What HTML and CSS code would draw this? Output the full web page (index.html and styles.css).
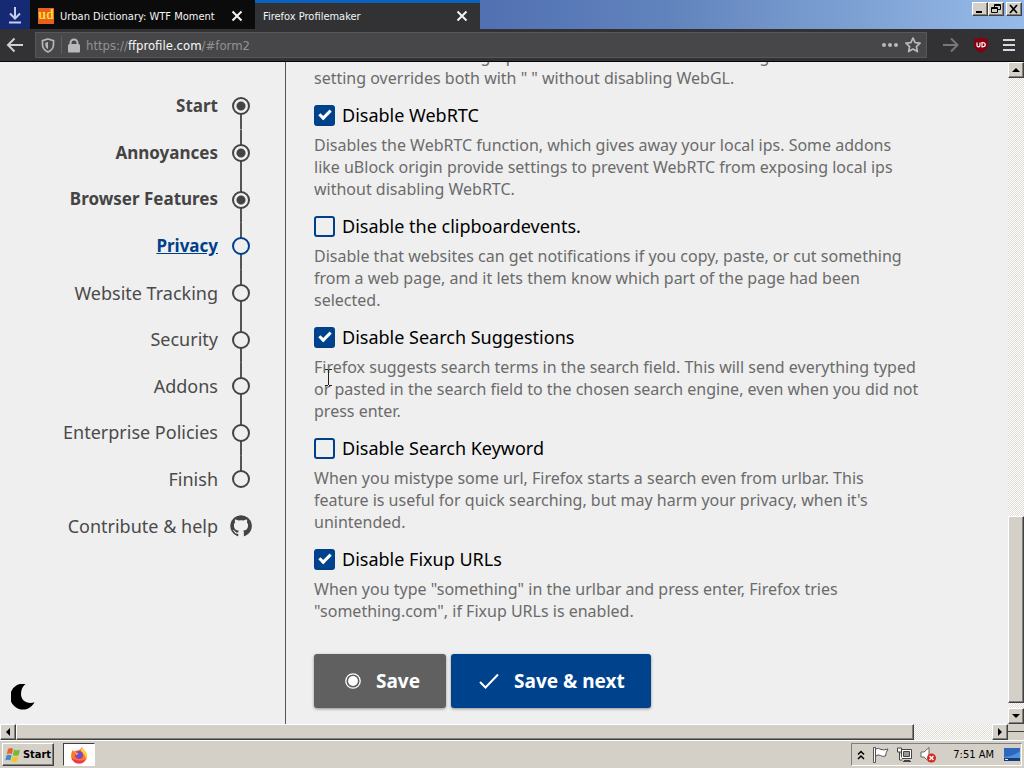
FILE: index.html
```
<!DOCTYPE html>
<html lang="en">
<head>
  <meta charset="UTF-8">
  <title>Firefox Profilemaker</title>
  <link rel="stylesheet" href="styles.css">
</head>
<body>

<header class="browser">
  <div class="tab-strip">
    <button class="download" aria-label="Downloads">
      <svg width="16" height="18" viewBox="0 0 16 18" fill="none" stroke="#c3d0f0" stroke-width="2"><path d="M8 1v11M3 7.500l5 5 5-5M2 16.500h12"/></svg>
    </button>
    <div class="tab">
      <span class="ud-icon">ud</span>
      <span class="tab-title">Urban Dictionary: WTF Moment</span>
      <button class="close" aria-label="Close tab"><svg width="12" height="12" viewBox="0 0 12 12" stroke="#f4f4f4" stroke-width="2"><path d="M1.500 1.500l9 9M10.500 1.500l-9 9"/></svg></button>
    </div>
    <div class="tab active">
      <span class="tab-title">Firefox Profilemaker</span>
      <button class="close" aria-label="Close tab"><svg width="12" height="12" viewBox="0 0 12 12" stroke="#f4f4f4" stroke-width="2"><path d="M1.500 1.500l9 9M10.500 1.500l-9 9"/></svg></button>
    </div>
    <div class="window-buttons">
      <button class="raised" aria-label="Minimize"><svg width="12" height="10" viewBox="0 0 12 10"><path d="M2 7h6v2H2z"/></svg></button>
      <button class="raised" aria-label="Restore"><svg width="12" height="10" viewBox="0 0 12 10" fill="none" stroke="#000"><path d="M4.500 3V.5h6v5H8M4 1.500h7M1.500 3.500h6v5h-6zM1 4.500h7"/></svg></button>
      <button class="raised last" aria-label="Close"><svg width="12" height="10" viewBox="0 0 12 10" stroke="#000" stroke-width="1.800"><path d="M2 1l7 8M9 1L2 9"/></svg></button>
    </div>
  </div>
  <div class="toolbar">
    <button class="tool" aria-label="Back"><svg width="18" height="16" viewBox="0 0 18 16" fill="none" stroke="#d0d0d2" stroke-width="2"><path d="M17 8H2M8.500 1.500L2 8l6.500 6.500"/></svg></button>
    <div class="url-bar">
      <svg width="14" height="15" viewBox="0 0 14 15"><path d="M7 1l5.500 1.600v4c0 3.500-2 5.900-5.500 7.400C3.500 12.500 1.500 10.100 1.500 6.600v-4z" fill="none" stroke="#b5b5b7" stroke-width="1.700"/><path d="M7 4v7.300C5 10 4.300 8.700 4.300 6.500V4.700z" fill="#b5b5b7"/></svg>
      <span class="divider"></span>
      <svg width="12" height="15" viewBox="0 0 12 15"><path d="M0 7.500Q0 6 1.500 6V5a4.500 4.500 0 0 1 9 0v1Q12 6 12 7.500v6q0 1-1 1H1q-1 0-1-1zM3.500 6h5V5a2.500 2.500 0 0 0-5 0z" fill="#b9b9bb" fill-rule="evenodd"/></svg>
      <span class="url">https://<b>ffprofile.com</b>/#form2</span>
      <svg width="18" height="6" viewBox="0 0 18 6" fill="#b9b9bb"><circle cx="3" cy="3" r="2"/><circle cx="9" cy="3" r="2"/><circle cx="15" cy="3" r="2"/></svg>
      <svg width="16" height="16" viewBox="0 0 16 16" fill="none" stroke="#b9b9bb" stroke-width="1.700" stroke-linejoin="round"><path d="M8 1l2.100 4.600 5 .6-3.700 3.400 1 5L8 12.100 3.600 14.600l1-5L.9 6.200l5-.6z"/></svg>
    </div>
    <button class="tool" aria-label="Forward"><svg width="17" height="16" viewBox="0 0 17 16" fill="none" stroke="#77777a" stroke-width="2"><path d="M1 8h14M9 1.500L15.500 8 9 14.500"/></svg></button>
    <button class="tool" aria-label="uBlock Origin"><svg width="14" height="16" viewBox="0 0 14 16"><path d="M7 0q3 2 7 2v5q0 6-7 9Q0 13 0 7V2q4 0 7-2z" fill="#850010"/><path d="M3 5.500v3q0 1.300 1.500 1.300T6 8.500v-3M8 5.500v4.300q3.300 0 3.300-2.100T8 5.500z" fill="none" stroke="#fff" stroke-width="1.200"/></svg></button>
    <button class="tool" aria-label="Menu"><svg width="12" height="12" viewBox="0 0 12 12" fill="#d8d8da"><path d="M0 0h12v2H0zM0 5h12v2H0zM0 10h12v2H0z"/></svg></button>
  </div>
</header>

<div class="viewport">
  <div class="page">
    <nav class="sidebar">
      <ol class="steps">
        <li class="done"><a href="#form0">Start</a><span class="marker first"></span></li>
        <li class="done"><a href="#form1">Annoyances</a><span class="marker"></span></li>
        <li class="done"><a href="#features">Browser Features</a><span class="marker"></span></li>
        <li class="current"><a href="#form2">Privacy</a><span class="marker"></span></li>
        <li><a href="#form3">Website Tracking</a><span class="marker"></span></li>
        <li><a href="#form4">Security</a><span class="marker"></span></li>
        <li><a href="#form5">Addons</a><span class="marker"></span></li>
        <li><a href="#form6">Enterprise Policies</a><span class="marker"></span></li>
        <li><a href="#finish">Finish</a><span class="marker end"></span></li>
        <li><a href="#contribute">Contribute &amp; help</a>
          <svg class="github" width="24" height="24" viewBox="0 0 16 16" fill="#444"><path d="M8 .8a7.200 7.200 0 0 0-2.300 14c.4.100.5-.1.500-.3v-1.400c-2 .4-2.500-.9-2.500-.9-.3-.8-.8-1-.8-1-.7-.5 0-.5 0-.5.700.1 1.100.8 1.100.8.700 1.100 1.700.8 2.200.6 0-.5.200-.8.400-1-1.600-.2-3.300-.8-3.300-3.600 0-.8.300-1.400.8-1.900-.1-.2-.4-.9 0-1.900 0 0 .7-.2 2.100.7a7 7 0 0 1 3.600 0c1.400-.9 2.100-.7 2.100-.7.400 1 .1 1.700 0 1.900.5.500.8 1.100.8 1.900 0 2.800-1.700 3.400-3.300 3.600.3.200.5.700.5 1.300v2.100c0 .2.100.4.500.3A7.200 7.200 0 0 0 8 .8z"/></svg>
        </li>
      </ol>
      <button class="moon" aria-label="Dark mode"><svg width="24" height="26" viewBox="0 0 24 26"><path d="M14.500 0A12.900 12.900 0 1 0 23.500 18.300C16 20.500 10 16.500 10 10 10 5.500 11.500 2.500 14.500 0z"/></svg></button>
    </nav>

    <main class="content">
      <form>
        <p class="help">WebGL can reveal the graphics card vendor and model using it. This<br>setting overrides both with " " without disabling WebGL.</p>

        <div class="option">
          <label><input type="checkbox" checked> Disable WebRTC</label>
          <p class="help">Disables the WebRTC function, which gives away your local ips. Some addons<br>like uBlock origin provide settings to prevent WebRTC from exposing local ips<br>without disabling WebRTC.</p>
        </div>

        <div class="option">
          <label><input type="checkbox"> Disable the clipboardevents.</label>
          <p class="help">Disable that websites can get notifications if you copy, paste, or cut something<br>from a web page, and it lets them know which part of the page had been<br>selected.</p>
        </div>

        <div class="option">
          <label><input type="checkbox" checked> Disable Search Suggestions</label>
          <p class="help">Firefox suggests search terms in the search field. This will send everything typed<br>or pasted in the search field to the chosen search engine, even when you did not<br>press enter.</p>
        </div>

        <div class="option">
          <label><input type="checkbox"> Disable Search Keyword</label>
          <p class="help">When you mistype some url, Firefox starts a search even from urlbar. This<br>feature is useful for quick searching, but may harm your privacy, when it's<br>unintended.</p>
        </div>

        <div class="option">
          <label><input type="checkbox" checked> Disable Fixup URLs</label>
          <p class="help">When you type "something" in the urlbar and press enter, Firefox tries<br>"something.com", if Fixup URLs is enabled.</p>
        </div>

        <div class="actions">
          <button type="button" class="btn save"><svg width="16" height="16" viewBox="0 0 16 16"><circle cx="8" cy="8" r="7.200" fill="none" stroke="#fff" stroke-width="1.300"/><circle cx="8" cy="8" r="4.900" fill="#fff"/></svg>Save</button>
          <button type="submit" class="btn next"><svg width="20" height="16" viewBox="0 0 20 16" fill="none" stroke="#fff" stroke-width="2"><path d="M1 9l5.500 5.500L19 1.500"/></svg>Save &amp; next</button>
        </div>
      </form>
    </main>
  </div>

  <div class="scrollbar vertical">
    <button class="raised" aria-label="Scroll up"><svg width="8" height="4" viewBox="0 0 8 4"><path d="M4 0l4 4H0z"/></svg></button>
    <div class="track"><div class="raised thumb"></div></div>
    <button class="raised" aria-label="Scroll down"><svg width="8" height="4" viewBox="0 0 8 4"><path d="M0 0h8L4 4z"/></svg></button>
  </div>
  <div class="scrollbar horizontal">
    <button class="raised" aria-label="Scroll left"><svg width="4" height="8" viewBox="0 0 4 8"><path d="M0 4l4-4v8z"/></svg></button>
    <div class="track"><div class="raised thumb"></div></div>
    <button class="raised" aria-label="Scroll right"><svg width="4" height="8" viewBox="0 0 4 8"><path d="M4 4L0 0v8z"/></svg></button>
  </div>
  <div class="corner"></div>
</div>

<footer class="taskbar">
  <button class="raised start">
    <svg width="16" height="16" viewBox="0 0 16 16"><path d="M3 2q3-2 5 0L6.800 7.300q-2.300-1.700-5 0z" fill="#e8622c"/><path d="M9 2.500q3 1.700 6 0L13.800 8q-3 1.700-6 0z" fill="#75b83e"/><path d="M1.500 8.500q2.500-1.700 5 0L5.300 13.500q-2.300-1.700-5 0z" fill="#3b8ccc"/><path d="M7.500 9q3 1.700 6 0L12.200 14.300q-3 1.700-6 0z" fill="#f5c52c"/></svg>Start
  </button>
  <button class="task" aria-label="Firefox">
    <svg width="18" height="18" viewBox="0 0 18 18"><path d="M12 1q.5 2 2.500 3.500Q17 7 17 10a8 7.500 0 0 1-16 0Q1 6 3 3.500q0 1.500 1 2Q5.500 4 8 4.500 10.500 4 12 1z" fill="#ff7a1f"/><path d="M12 1q.5 2 2.500 3.500 2.500 2.500 2.500 5.500l-1 3q-1-5-5-7.500Q10.500 4 12 1z" fill="#ffd43a"/><path d="M1.500 12q2 5.500 7.500 5.500 5 0 7-4.500-3 2-7 1.500T1.500 12z" fill="#f0365a"/><circle cx="9" cy="9" r="4" fill="#8046cc"/><path d="M4.500 6q2.500 0 4 1.500-1.500 1-2 2Q5 8 4.500 6z" fill="#ffab2d"/></svg>
  </button>
  <div class="tray">
    <svg width="8" height="10" viewBox="0 0 8 10" fill="none" stroke="#000" stroke-width="1.500"><path d="M1 4.500l3-3 3 3M1 9l3-3 3 3"/></svg>
    <svg class="flag" width="17" height="16" viewBox="0 0 17 16" fill="#fff" stroke="#555"><path d="M1.500 15.500V.5h2v15zM3.500 2q3-1.500 5.500.5 3 1 7-.5-2 3-2.500 7-3 1-5-.5T3.500 9z"/></svg>
    <svg width="17" height="16" viewBox="0 0 17 16" fill="#fff" stroke="#444"><path d="M5.500 2.500h10v9h-10z"/><path d="M7.500 4.500h6v5h-6z" fill="#999"/><path d="M7 14.500h8M8 13.500h6M1.500 1v4h4V1zM3.500 5v8h3" /></svg>
    <svg width="17" height="16" viewBox="0 0 17 16"><path d="M1 5h3l5-4.500v14L4 10H1z" fill="#fff" stroke="#666"/><circle cx="11.500" cy="11" r="4.500" fill="#d8281f"/><path d="M9.500 9l4 4M13.500 9l-4 4" stroke="#fff" stroke-width="1.400"/></svg>
    <time>7:51 AM</time>
    <svg class="desktop" width="16" height="13" viewBox="0 0 16 13"><path d="M0 0h16v13H0z" fill="#2d68bd"/><path d="M0 9Q10 8 16 3v7H0z" fill="#4c93df"/><path d="M0 10h16v3H0z" fill="#173a79"/><path d="M1 11h3v1H1z" fill="#dce8f8"/></svg>
  </div>
</footer>

<svg class="cursor" width="9" height="17" viewBox="0 0 9 17" stroke="#222"><path d="M1 .5h3M5 .5h3M4.500 1v15M1 16.500h3M5 16.500h3"/></svg>

</body>
</html>
```
FILE: styles.css
```
*,
*::before {
  box-sizing: border-box;
}
body {
  margin: 0;
  height: 100vh;
  display: flex;
  flex-direction: column;
  overflow: hidden;
  background: #d4d0c8;
  font-family: "Noto Sans", "Open Sans", sans-serif;
}
button {
  display: flex;
  align-items: center;
  justify-content: center;
  padding: 0;
  border: none;
  background: none;
  cursor: pointer;
}

/* browser chrome */
.browser {
  color: #f4f4f4;
  font-family: "DejaVu Sans Condensed", "DejaVu Sans", sans-serif;
  font-size: 11px;
  border-bottom: 1px solid #050505;
}
.tab-strip {
  display: flex;
  height: 29px;
  background: linear-gradient(90deg, #4a69ad 40%, #6183bd 65%, #97bbe8);
}
.download {
  width: 30px;
  background: #152a73;
}
.tab {
  display: flex;
  align-items: center;
  gap: 6px;
  width: 225px;
  padding: 3px 12px 0 8px;
  background: #0b0b0c;
}
.tab.active {
  padding-top: 0;
  border-top: 3px solid #0b62c0;
  background: #323234;
}
.tab-title {
  flex: 1;
  white-space: nowrap;
}
.ud-icon {
  width: 16px;
  height: 16px;
  background: #e8601f;
  color: #ffd83a;
  font: bold 14px/14px "Liberation Serif", serif;
  text-align: center;
}
.raised {
  background: #d4d0c8;
  border: 1px solid;
  border-color: #fff #404040 #404040 #fff;
  box-shadow: inset -1px -1px 0 #808080;
}
.window-buttons {
  display: flex;
  margin: 2px 2px 0 auto;
}
.window-buttons .raised {
  width: 16px;
  height: 14px;
}
.window-buttons .last {
  margin-left: 2px;
}
.toolbar {
  display: flex;
  align-items: center;
  height: 32px;
  padding: 0 9px 0 6px;
  gap: 15px;
  background: #323234;
}
.url-bar {
  flex: 1;
  display: flex;
  align-items: center;
  gap: 6px;
  height: 26px;
  margin-left: -4px;
  padding: 0 5px;
  border: 1px solid #58585a;
  background: #474749;
}
.divider {
  width: 1px;
  height: 18px;
  background: #5e5e60;
}
.url {
  flex: 1;
  font-size: 13px;
  color: #929294;
}
.url b {
  font-weight: normal;
  color: #f8f8f8;
}

/* page and its scrollbars */
.viewport {
  flex: 1;
  min-height: 0;
  display: grid;
  grid-template-columns: 1fr 16px;
  grid-template-rows: minmax(0, 1fr) 16px;
}
.page {
  display: flex;
  min-height: 0;
  overflow: hidden;
  background: #efefef;
}
.scrollbar {
  display: flex;
}
.scrollbar button {
  width: 16px;
  height: 16px;
}
.vertical {
  flex-direction: column;
}
.track {
  flex: 1;
  display: flex;
  background: repeating-conic-gradient(#dedbd5 0 25%, #fff 0 50%) 0 0 / 2px 2px;
}
.vertical .track {
  flex-direction: column;
  justify-content: flex-end;
  padding-bottom: 5px;
}
.vertical .thumb {
  height: 30%;
}
.horizontal .thumb {
  width: 92%;
}
.corner {
  background: linear-gradient(#404040, #404040) 0 7px / 100% 1px no-repeat;
}

/* steps */
.sidebar {
  display: flex;
  flex-direction: column;
  justify-content: space-between;
  align-items: flex-start;
  width: 286px;
  padding: 21px 32px 14px 11px;
  border-right: 1px solid #555;
}
.steps {
  align-self: stretch;
  margin: 0;
  padding: 0;
  list-style: none;
  font-size: 18px;
  line-height: 1.48em;
}
.steps li {
  display: flex;
  justify-content: flex-end;
  align-items: center;
  gap: 11px;
}
.steps a {
  padding: 10px 0;
  color: #4a4a4a;
  text-decoration: none;
}
.steps .done a,
.steps .current a {
  color: #444;
  font-size: 17px;
  font-weight: bold;
}
.steps .current a {
  color: #003f8a;
  text-decoration: underline;
}
.marker {
  align-self: stretch;
  display: flex;
  align-items: center;
  justify-content: center;
  width: 24px;
  background: linear-gradient(#555, #555) center / 2px 100% no-repeat;
}
.marker.first {
  background-position: center bottom;
  background-size: 2px 50%;
}
.marker.end {
  background-position: center top;
  background-size: 2px 50%;
}
.marker::before {
  content: "";
  width: 18px;
  height: 18px;
  border: 2px solid #444;
  border-radius: 50%;
  background: #efefef;
}
.done .marker::before {
  background: radial-gradient(#444 4px, #efefef 5px);
}
.current .marker::before {
  border-color: #003f8a;
}

/* options */
.content {
  flex: 1;
  display: flex;
  flex-direction: column;
  justify-content: flex-end;
  padding: 0 28px 16px;
}
.help {
  margin: 0;
  color: #6b6b6b;
  font-size: 16px;
  line-height: 22px;
  white-space: nowrap;
}
.option {
  padding-top: 13px;
}
.option label {
  display: flex;
  align-items: center;
  gap: 7px;
  margin-bottom: 5px;
  font-size: 18px;
  line-height: 27px;
}
.option input {
  appearance: none;
  width: 21px;
  height: 21px;
  margin: 0;
  border: 2px solid #003f8a;
  border-radius: 3px;
}
.option input:checked {
  background: #00428c;
}
.option input:checked::before {
  content: "";
  display: block;
  width: 12px;
  height: 7px;
  margin: 3px;
  border: solid #fff;
  border-width: 0 0 3px 3px;
  transform: rotate(-45deg);
}
.actions {
  display: flex;
  gap: 5px;
  margin-top: 32px;
}
.btn {
  gap: 15px;
  padding: 0 26px;
  height: 54px;
  border-radius: 3px;
  box-shadow: 0 1px 3px rgba(0, 0, 0, 0.4);
  color: #fff;
  font: bold 19px "Noto Sans", sans-serif;
}
.save {
  padding-left: 31px;
  background: #606060;
}
.next {
  padding-left: 28px;
  background: #00428c;
}
.moon {
  width: 24px;
  height: 26px;
}

/* taskbar */
.taskbar {
  display: flex;
  align-items: center;
  height: 28px;
  padding: 2px;
  border-top: 1px solid #fff;
  font-family: "DejaVu Sans Condensed", "DejaVu Sans", sans-serif;
  font-size: 11px;
}
.start {
  gap: 2px;
  width: 52px;
  height: 23px;
  font: bold 11px "DejaVu Sans Condensed", sans-serif;
}
.task {
  width: 32px;
  height: 23px;
  margin-left: 9px;
  border: 1px solid;
  border-color: #404040 #fff #fff #404040;
  background: #fff;
}
.tray {
  display: flex;
  align-items: center;
  gap: 7px;
  height: 23px;
  margin-left: auto;
  padding: 0 1px 0 5px;
  border: 1px solid;
  border-color: #808080 #fff #fff #808080;
}
.tray time {
  margin: 0 3px 0 9px;
}

.cursor {
  position: absolute;
  left: 324px;
  top: 369px;
}
```
